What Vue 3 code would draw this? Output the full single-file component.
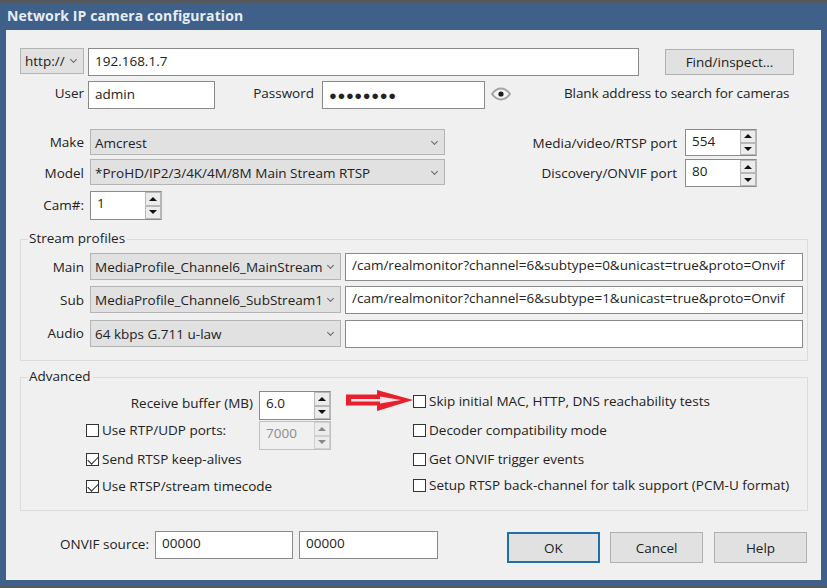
<template>
  <div class="window">
    <div class="desktop-strip"></div>
    <div class="titlebar">Network IP camera configuration</div>

    <div class="client">
      <!-- address -->
      <div class="row row-address">
        <div class="combo combo-scheme"><span>http://</span><i class="chev"></i></div>
        <div class="field field-address">192.168.1.7</div>
        <button class="btn btn-find">Find/inspect...</button>
      </div>

      <!-- credentials -->
      <div class="row row-login">
        <label class="lbl lbl-user">User</label>
        <div class="field field-user">admin</div>
        <label class="lbl lbl-pass">Password</label>
        <div class="field field-pass">●●●●●●●●</div>
        <svg class="eye" width="20" height="14" viewBox="0 0 20 14">
          <path d="M1 7C4 3 7 1.500 10 1.500S16 3 19 7C16 11 13 12.500 10 12.500S4 11 1 7Z" fill="#f4f4f4" stroke="#a3a3a3" stroke-width="2" />
          <circle cx="10" cy="7" r="2.600" fill="#1c1c1c" />
        </svg>
        <span class="hint">Blank address to search for cameras</span>
      </div>

      <!-- camera -->
      <div class="row row-make">
        <label class="lbl lbl-cam">Make</label>
        <div class="combo combo-make"><span>Amcrest</span><i class="chev"></i></div>
        <label class="lbl lbl-port">Media/video/RTSP port</label>
        <div class="spin spin-port">
          <div class="spin-value">554</div>
          <div class="spin-btns"><b class="up"></b><b class="down"></b></div>
        </div>
      </div>
      <div class="row row-model">
        <label class="lbl lbl-cam">Model</label>
        <div class="combo combo-make"><span>*ProHD/IP2/3/4K/4M/8M Main Stream RTSP</span><i class="chev"></i></div>
        <label class="lbl lbl-port">Discovery/ONVIF port</label>
        <div class="spin spin-port">
          <div class="spin-value">80</div>
          <div class="spin-btns"><b class="up"></b><b class="down"></b></div>
        </div>
      </div>
      <div class="row row-cam">
        <label class="lbl lbl-cam">Cam#:</label>
        <div class="spin">
          <div class="spin-value">1</div>
          <div class="spin-btns"><b class="up"></b><b class="down"></b></div>
        </div>
      </div>

      <!-- Stream profiles -->
      <section class="group group-stream">
        <span class="legend">Stream profiles</span>
        <div class="stream-row" v-for="s in streams" :key="s.label" :class="s.cls">
          <label class="lbl lbl-stream">{{ s.label }}</label>
          <div class="combo combo-stream"><span>{{ s.profile }}</span><i class="chev"></i></div>
          <div class="field field-stream">{{ s.url }}</div>
        </div>
      </section>

      <!-- Advanced -->
      <section class="group group-adv">
        <span class="legend">Advanced</span>
        <svg class="arrow" width="68" height="24" viewBox="0 0 68 24">
          <path d="M0 5.500H31V1L67 11L31 22V16.500H0Z" fill="#e8202c" />
          <path d="M5 10H34V7.500L55 11L34 14.500V12.500H5Z" fill="#f7e4e5" />
        </svg>
        <div class="adv-cols">
          <div class="adv-left">
            <div class="adv-row">
              <label class="lbl lbl-buffer">Receive buffer (MB)</label>
              <div class="spin">
                <div class="spin-value">6.0</div>
                <div class="spin-btns"><b class="up"></b><b class="down"></b></div>
              </div>
            </div>
            <div class="adv-row adv-row-rtp">
              <div class="check check-rtp"><i class="box"></i>Use RTP/UDP ports:</div>
              <div class="spin spin-off">
                <div class="spin-value">7000</div>
                <div class="spin-btns"><b class="up"></b><b class="down"></b></div>
              </div>
            </div>
            <div class="check check-left"><i class="box on"></i>Send RTSP keep-alives</div>
            <div class="check check-left check-last"><i class="box on"></i>Use RTSP/stream timecode</div>
          </div>
          <div class="adv-right">
            <div class="check"><i class="box"></i>Skip initial MAC, HTTP, DNS reachability tests</div>
            <div class="check"><i class="box"></i>Decoder compatibility mode</div>
            <div class="check"><i class="box"></i>Get ONVIF trigger events</div>
            <div class="check check-last"><i class="box"></i>Setup RTSP back-channel for talk support (PCM-U format)</div>
          </div>
        </div>
      </section>

      <!-- footer -->
      <div class="row row-footer">
        <label class="lbl lbl-onvif">ONVIF source:</label>
        <div class="field field-onvif">00000</div>
        <div class="field field-onvif">00000</div>
        <button class="btn btn-dialog btn-ok">OK</button>
        <button class="btn btn-dialog">Cancel</button>
        <button class="btn btn-dialog">Help</button>
      </div>
    </div>
    <div class="desktop-strip desktop-strip-bottom"></div>
  </div>
</template>

<script setup>
const streams = [
  {
    label: 'Main',
    cls: 'stream-main',
    profile: 'MediaProfile_Channel6_MainStream',
    url: '/cam/realmonitor?channel=6&subtype=0&unicast=true&proto=Onvif',
  },
  {
    label: 'Sub',
    cls: 'stream-sub',
    profile: 'MediaProfile_Channel6_SubStream1',
    url: '/cam/realmonitor?channel=6&subtype=1&unicast=true&proto=Onvif',
  },
  {
    label: 'Audio',
    cls: 'stream-audio',
    profile: '64 kbps G.711 u-law',
    url: '',
  },
]
</script>

<style>
html, body { margin: 0; background: #3e6089; }
</style>

<style scoped>
* { box-sizing: border-box; }

.window {
  width: 827px;
  height: 588px;
  overflow: hidden;
  background: #3e6089;
  font-family: "Open Sans", "Noto Sans", sans-serif;
  font-size: 13.500px;
  color: #222;
}

.desktop-strip { height: 3px; background: #55585c; }
.desktop-strip-bottom { height: 2px; margin-top: 6px; }

.titlebar {
  height: 27px;
  padding: 2px 0 0 7px;
  line-height: 22px;
  font-size: 14px;
  font-weight: 700;
  letter-spacing: 0.100px;
  color: #e6edf5;
}

.client {
  width: 815px;
  height: 550px;
  margin-left: 6px;
  padding: 18px 13px 0 14px;
  background: #f0f0f0;
}

.row { display: flex; align-items: flex-start; }
.row-login { margin-top: 5px; }
.row-make { height: 27px; margin-top: 20px; }
.row-model { margin-top: 3px; }
.row-cam { margin-top: 3px; }
.row-footer { margin-top: 20px; }

.lbl { text-align: right; white-space: nowrap; }

/* inputs */
.field {
  height: 28px;
  padding: 0 6px;
  line-height: 24px;
  background: #fff;
  border: 1px solid #8a8a8a;
  white-space: nowrap;
  overflow: hidden;
}

.field-address { width: 551px; margin-left: 4px; }
.field-user { width: 127px; margin-left: 4px; }
.field-pass { width: 163px; margin-left: 8px; font-size: 13px; letter-spacing: 0.600px; line-height: 26px; }
.field-stream { width: 458px; height: 28px; margin-left: 4px; line-height: 23px; }
.field-onvif { width: 139px; margin-left: 6px; line-height: 23px; }
.lbl-onvif + .field-onvif { width: 138px; }

.lbl-user { width: 64px; line-height: 24px; }
.lbl-pass { width: 99px; line-height: 24px; }
.lbl-onvif { width: 129px; line-height: 26px; }
.eye { margin: 6px 0 0 6px; }
.hint { margin-left: 53px; line-height: 24px; letter-spacing: -0.100px; }

/* combos */
.combo {
  display: flex;
  align-items: center;
  justify-content: space-between;
  height: 26px;
  padding: 0 4px;
  background: #e1e1e1;
  border: 1px solid #b4b4b4;
  white-space: nowrap;
}

.combo-scheme { width: 64px; }
.combo-make { width: 355px; margin-left: 6px; padding-top: 1px; }
.combo-stream { width: 251px; height: 27px; margin-left: 6px; }

.chev {
  flex: none;
  width: 5px;
  height: 5px;
  margin: -3px 3px 0 4px;
  border-right: 1px solid #666;
  border-bottom: 1px solid #666;
  transform: rotate(45deg);
}

.lbl-cam { width: 64px; line-height: 27px; }
.row-model .lbl-cam { line-height: 28px; }
.row-cam .lbl-cam { line-height: 29px; }
.lbl-port { flex: 1; padding-right: 8px; line-height: 29px; }

/* spin boxes */
.spin {
  display: flex;
  width: 72px;
  height: 29px;
  margin-left: 6px;
  background: #fff;
  border: 1px solid #8a8a8a;
  border-right-color: #b4b4b4;
}

.spin-value { flex: 1; padding-left: 6px; line-height: 22px; }

.spin-btns {
  display: flex;
  flex-direction: column;
  width: 16px;
  padding: 1px;
  gap: 2px;
  background: #b8b8b8;
}

.spin-btns b {
  flex: 1;
  display: flex;
  align-items: center;
  justify-content: center;
  background: #ececec;
}

.spin-btns b::before {
  content: "";
  border-left: 4px solid transparent;
  border-right: 4px solid transparent;
}

.up::before { border-bottom: 4px solid #111; }
.down::before { border-top: 4px solid #111; }

.spin-port { height: 27px; margin: 0 51px 0 0; }
.row-model .spin-port { height: 28px; }

.spin-off { color: #8c8c8c; background: #f0f0f0; border-color: #c0c0c0; }
.spin-off .spin-btns { background: #d0d0d0; }
.spin-off .up::before { border-bottom-color: #888; }
.spin-off .down::before { border-top-color: #888; }

/* buttons */
.btn {
  padding: 0;
  font: inherit;
  color: #222;
  background: #e1e1e1;
  border: 1px solid #b0b0b0;
}

.btn-find { width: 129px; height: 26px; margin: 1px 0 0 26px; }

.btn-dialog { width: 93px; height: 31px; margin: 1px 0 0 10px; }
.btn-ok { margin-left: 69px; border: 2px solid #1f6fa8; }
.btn-dialog:last-child { margin-left: 11px; }

/* groups */
.group {
  position: relative;
  width: 788px;
  border: 1px solid #dcdcdc;
}

.legend {
  position: absolute;
  top: -12px;
  left: 7px;
  padding: 0 2px 0 1px;
  line-height: 20px;
  background: #f0f0f0;
}

.group-stream {
  height: 122px;
  margin-top: 19px;
  padding-top: 13px;
}

.stream-row { display: flex; }
.stream-sub { margin-top: 5px; }
.stream-audio { margin-top: 6px; }
.stream-audio .lbl-stream { padding-top: 0; }
.lbl-stream { width: 63px; padding-top: 1px; line-height: 27px; }

.group-adv {
  height: 134px;
  margin-top: 16px;
  padding-top: 13px;
}

.arrow { position: absolute; top: 11px; left: 325px; }

.adv-cols { display: flex; }
.adv-left { width: 392px; }
.adv-right { display: flex; flex-direction: column; }

.adv-row { display: flex; margin-bottom: 1px; }
.adv-row-rtp { margin-bottom: -1px; }
.lbl-buffer { width: 232px; line-height: 25px; }

.check {
  display: flex;
  align-items: center;
  height: 20px;
  margin-bottom: 9px;
  white-space: nowrap;
}

.check-last { margin: -3px 0 0; }
.check-rtp { width: 232px; margin: -1px 0 0 65px; flex: none; }
.check-rtp + .spin { margin-left: -59px; }
.check-left { margin-left: 65px; }
.check-left.check-last { margin: -2px 0 0 65px; }

.box {
  position: relative;
  flex: none;
  width: 13px;
  height: 13px;
  margin-right: 3px;
  background: #fff;
  border: 1px solid #333;
}

.box.on::after {
  content: "";
  position: absolute;
  top: 0;
  left: 3px;
  width: 5px;
  height: 9px;
  border-right: 1px solid #222;
  border-bottom: 1px solid #222;
  transform: rotate(45deg);
}
</style>
